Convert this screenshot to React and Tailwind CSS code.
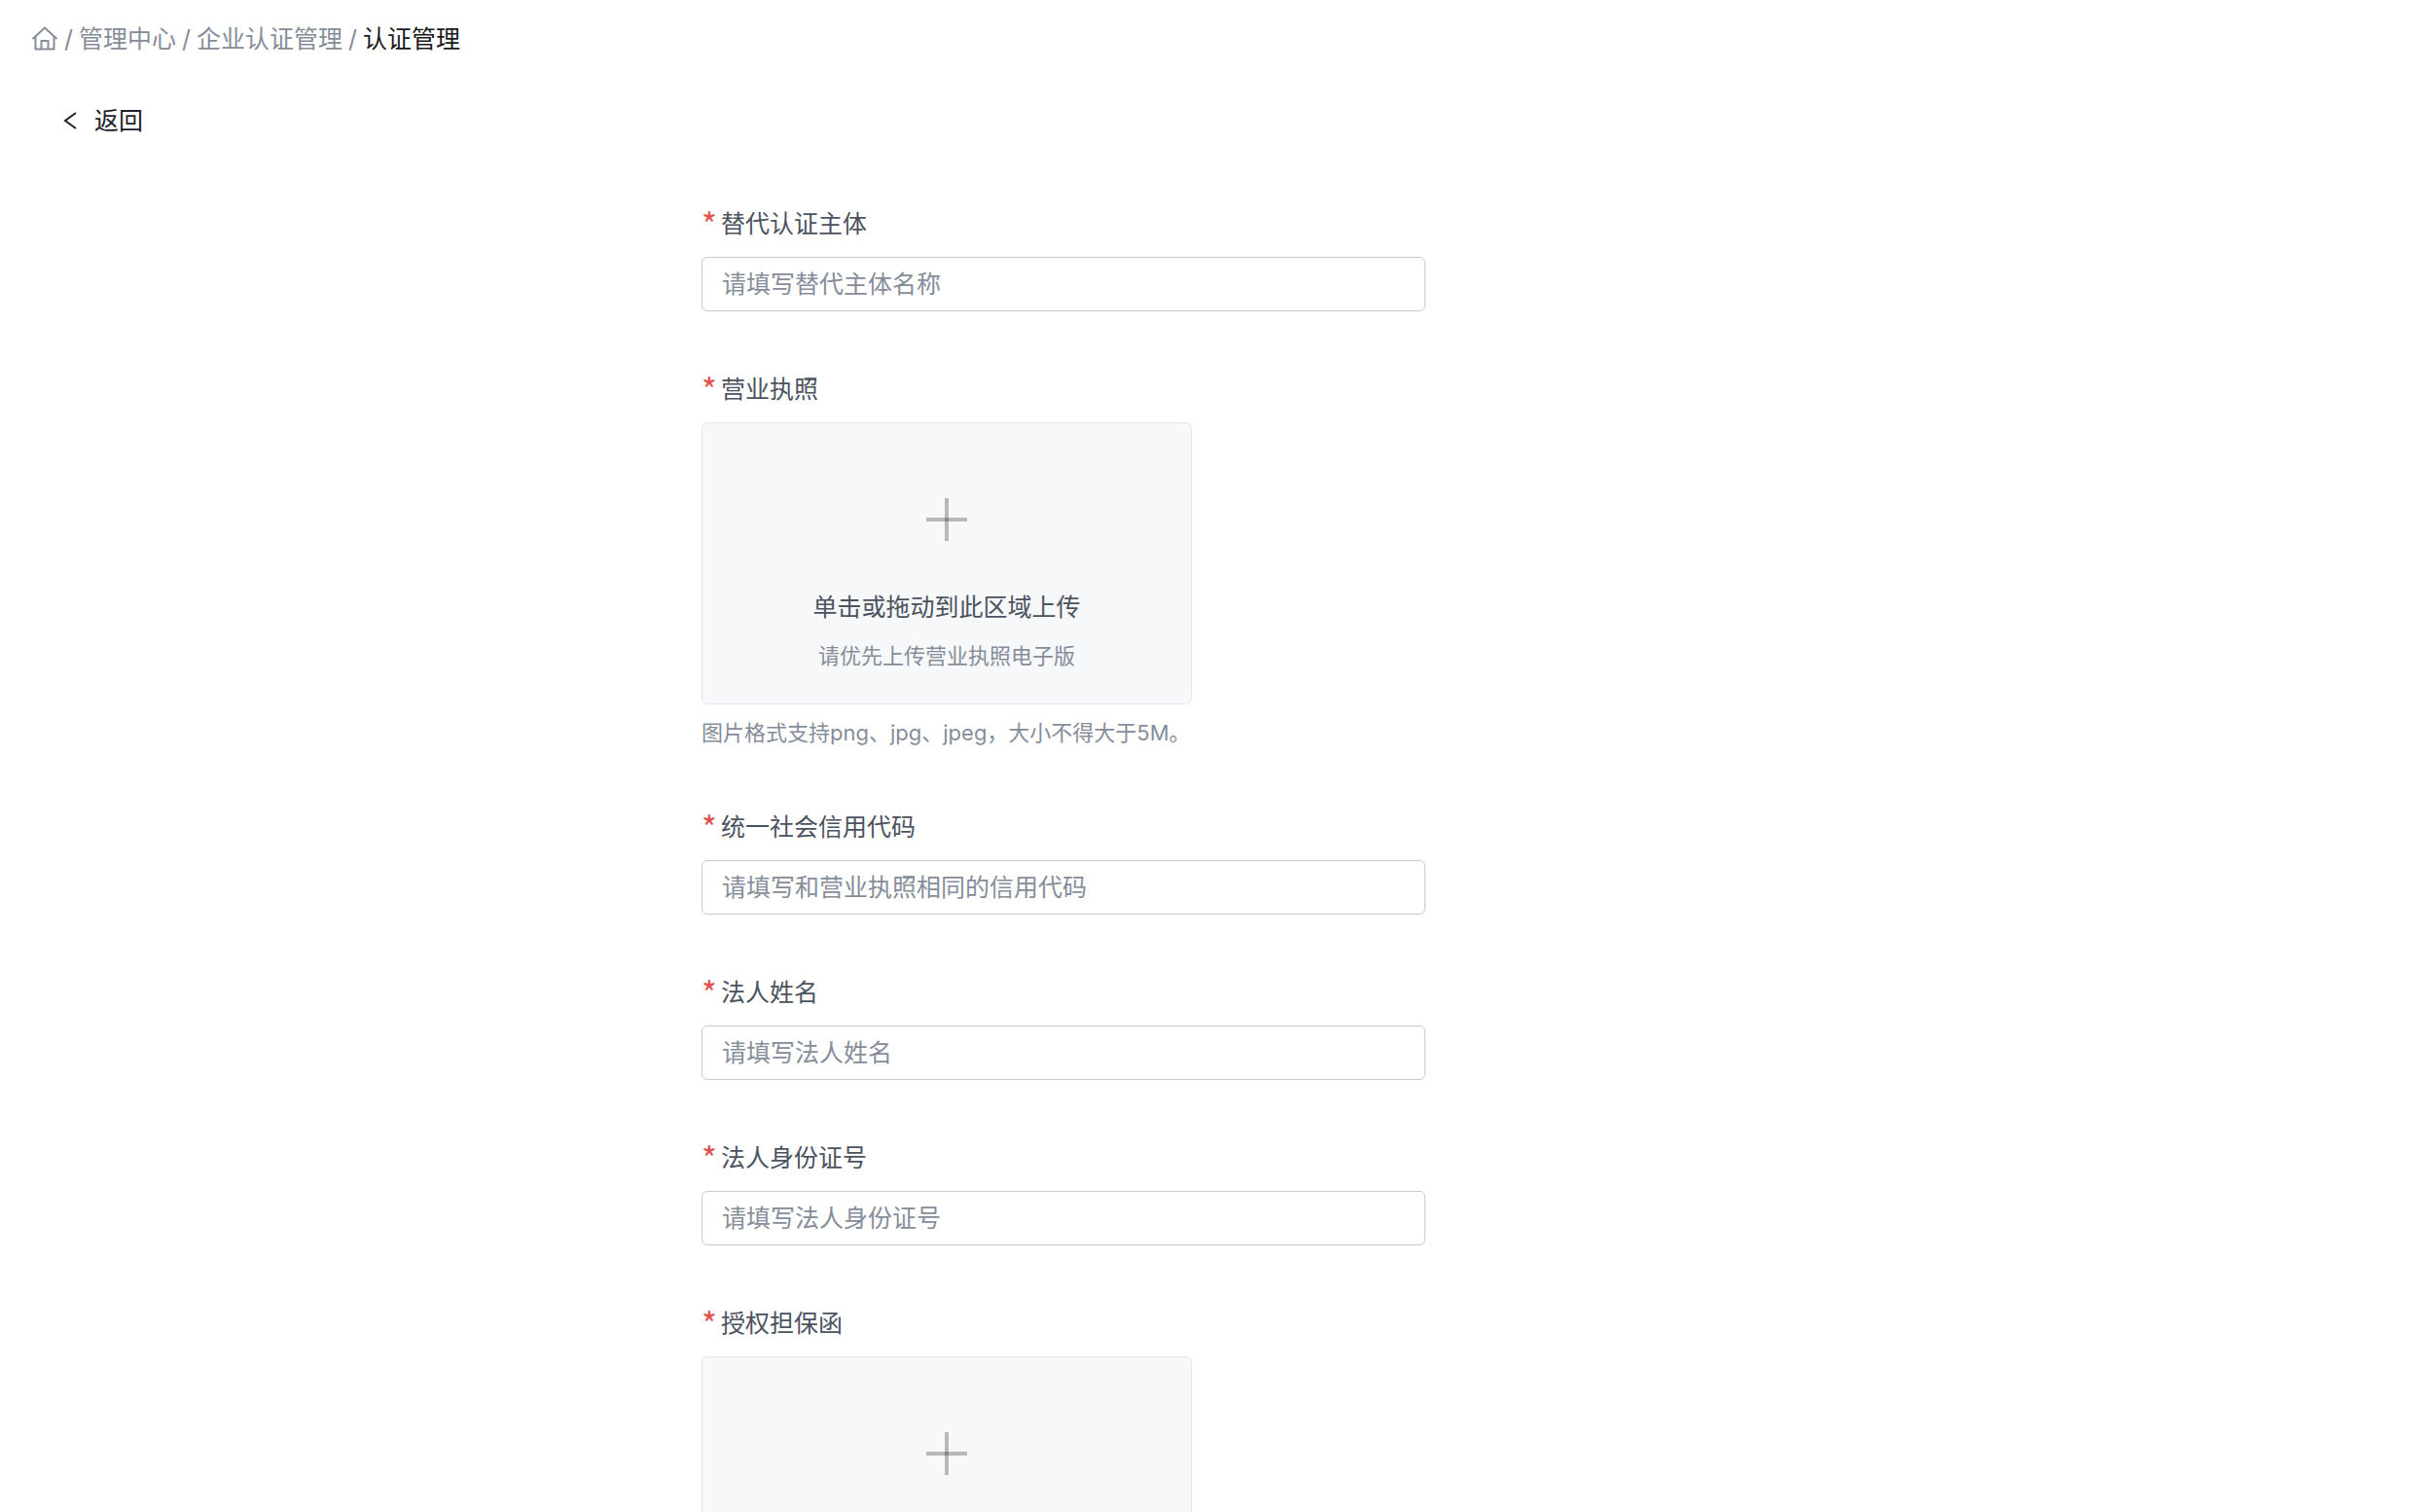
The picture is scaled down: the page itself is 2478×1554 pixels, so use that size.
import { useState } from 'react';

const FIELDS = [
  { id: 'subject', label: '替代认证主体', type: 'text', placeholder: '请填写替代主体名称' },
  { id: 'license', label: '营业执照', type: 'upload', tip: '请优先上传营业执照电子版' },
  { id: 'creditCode', label: '统一社会信用代码', type: 'text', placeholder: '请填写和营业执照相同的信用代码' },
  { id: 'legalName', label: '法人姓名', type: 'text', placeholder: '请填写法人姓名' },
  { id: 'legalId', label: '法人身份证号', type: 'text', placeholder: '请填写法人身份证号' },
  { id: 'guarantee', label: '授权担保函', type: 'upload' },
];

function HomeIcon() {
  return (
    <svg className="h-7 w-7" viewBox="0 0 28 28" fill="none" stroke="currentColor" strokeWidth="2">
      <path d="M1.500 14 14 2.500 26.500 14" />
      <path d="M4.500 12v12.500h19V12" />
      <path d="M10.500 24.500V16h7v8.500" />
    </svg>
  );
}

function Breadcrumb() {
  return (
    <nav className="flex items-center gap-1.5 px-8 pt-5 leading-10 text-[#868d9a]">
      <a href="#home" aria-label="首页">
        <HomeIcon />
      </a>
      <span>/</span>
      <a href="#center">管理中心</a>
      <span>/</span>
      <a href="#enterprise">企业认证管理</a>
      <span>/</span>
      <span className="text-[#18191c]">认证管理</span>
    </nav>
  );
}

function UploadBox({ id, tip }) {
  return (
    <>
      <div className="relative flex h-[290px] w-full max-w-[504px] flex-col items-center rounded-md border border-[#e3e6eb] bg-[#f7f8fa] pt-[76px] text-center">
        <svg className="h-[46px] w-[46px]" viewBox="0 0 46 46" fill="#000" fillOpacity="0.26">
          <rect x="2" y="21" width="42" height="4" />
          <rect x="21" y="1" width="4" height="44" />
        </svg>
        <label htmlFor={id} className="mt-[47px] cursor-pointer leading-10">
          单击或拖动到此区域上传
        </label>
        <input id={id} type="file" accept=".png,.jpg,.jpeg" className="sr-only" />
        {tip && <p className="mt-3 text-[22px] leading-9 text-[#868d9a]">{tip}</p>}
      </div>
      <p className="mt-3 text-[22px] leading-[34px] text-[#868d9a]">
        图片格式支持png、jpg、jpeg，大小不得大于5M。
      </p>
    </>
  );
}

function Field({ field, value, onChange }) {
  return (
    <div>
      <label htmlFor={field.id} className="mb-3.5 flex h-10 gap-1 leading-10">
        <span className="font-['Noto_Sans_CJK_SC',sans-serif] text-[34px] leading-10 text-[#e0524d]">*</span>
        {field.label}
      </label>
      {field.type === 'upload' ? (
        <UploadBox id={field.id} tip={field.tip} />
      ) : (
        <input
          id={field.id}
          type="text"
          value={value}
          onChange={(e) => onChange(field.id, e.target.value)}
          placeholder={field.placeholder}
          className="block h-14 w-full rounded-md border border-[#c9cacc] px-5 outline-none placeholder:text-[#868d9a] focus:border-blue-500"
        />
      )}
    </div>
  );
}

function App() {
  const [values, setValues] = useState({});

  const handleChange = (id, value) => {
    setValues((prev) => ({ ...prev, [id]: value }));
  };

  return (
    <div className="h-screen overflow-y-auto bg-white font-['Inter','Noto_Sans_CJK_SC',sans-serif] text-[25px] text-[#4b5260] [scrollbar-width:none]">
      <Breadcrumb />

      <button type="button" className="mt-11 ml-[65px] flex items-center gap-[18px] leading-10 text-[#1d2129]">
        <svg className="h-[18px] w-[14px]" viewBox="0 0 14 18" fill="none" stroke="currentColor" strokeWidth="2">
          <path d="M13 1 2 9l11 8" />
        </svg>
        返回
      </button>

      <main className="grid grid-cols-[721fr_minmax(0,744px)_1013fr] pt-[66px] pb-16">
        <form className="col-start-2 flex flex-col gap-[60px]" onSubmit={(e) => e.preventDefault()}>
          {FIELDS.map((field) => (
            <Field key={field.id} field={field} value={values[field.id] || ''} onChange={handleChange} />
          ))}
        </form>
      </main>
    </div>
  );
}

export default App;
